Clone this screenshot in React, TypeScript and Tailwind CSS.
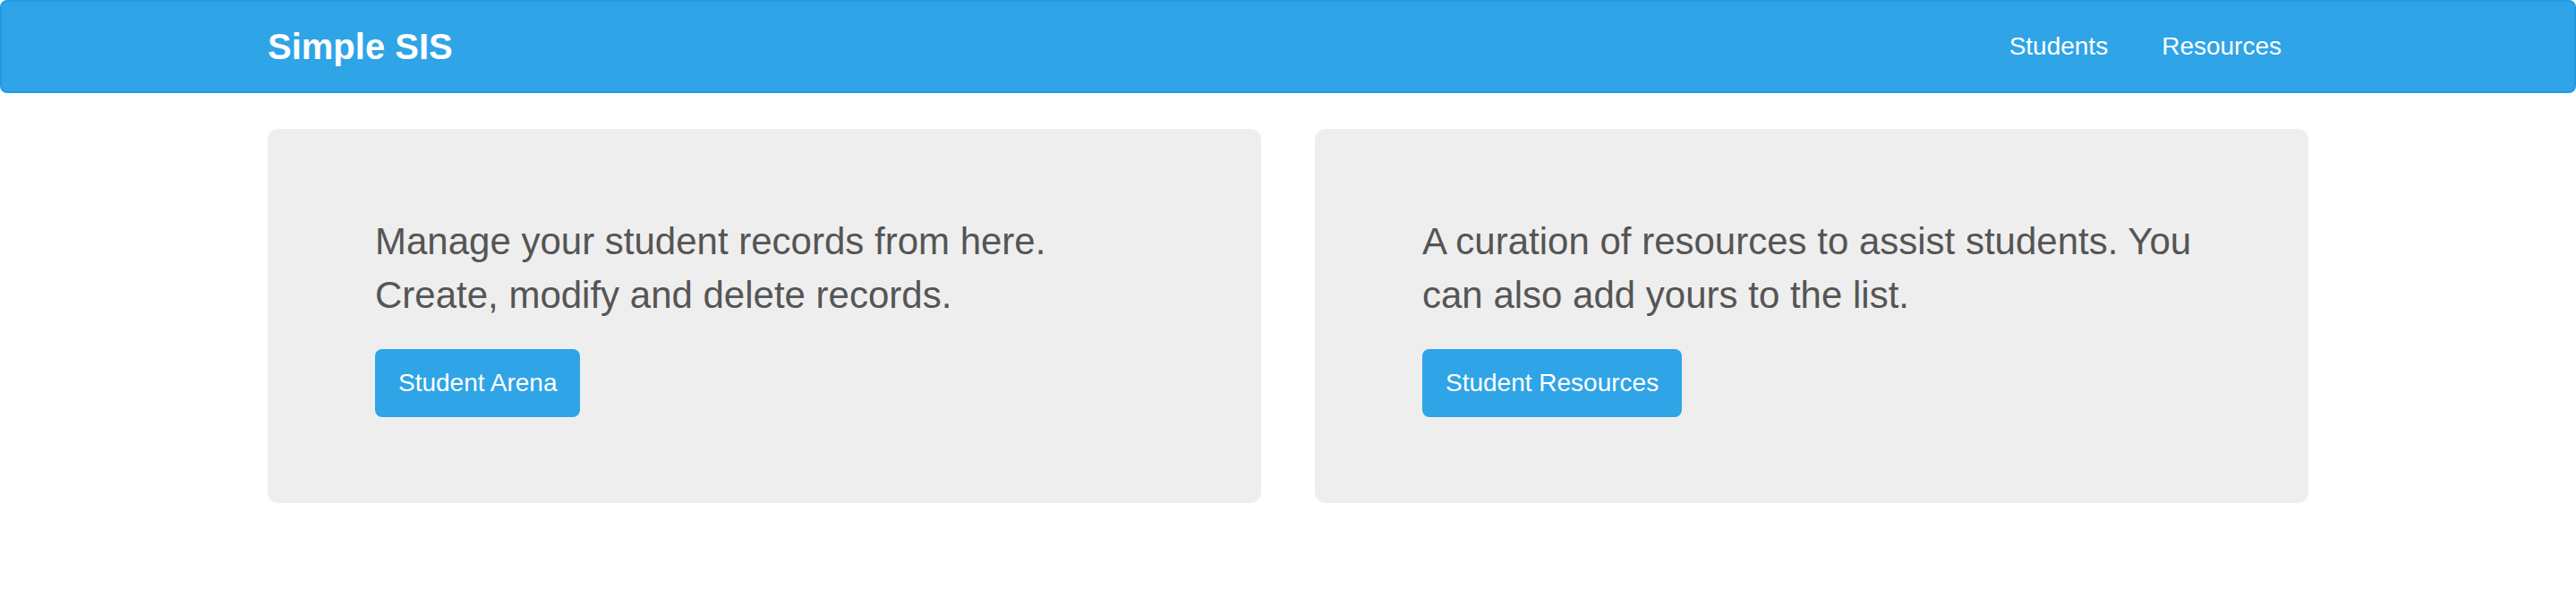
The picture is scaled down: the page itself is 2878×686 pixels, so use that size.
import React from "react";

const cards = [
  {
    text: "Manage your student records from here. Create, modify and delete records.",
    label: "Student Arena",
  },
  {
    text: "A curation of resources to assist students. You can also add yours to the list.",
    label: "Student Resources",
  },
];

export default function App() {
  return (
    <div className="min-h-[686px] bg-white font-['Liberation_Sans',Arial,sans-serif] text-[#555555]">
      <nav className="mb-[40px] h-[104px] rounded-lg border-2 border-[#1d9ce5] bg-[#2fa4e7]">
        <div className="mx-auto flex w-[2340px] items-start justify-between px-[30px]">
          <a className="py-[30px] text-[40px] font-bold leading-[40px] text-white" href="#">
            Simple SIS
          </a>
          <ul className="flex">
            <li>
              <a className="block px-[30px] py-[30px] text-[28px] leading-[40px] text-white" href="#">
                Students
              </a>
            </li>
            <li>
              <a className="block px-[30px] py-[30px] text-[28px] leading-[40px] text-white" href="#">
                Resources
              </a>
            </li>
          </ul>
        </div>
      </nav>
      <div className="mx-auto grid w-[2340px] grid-cols-2 gap-[60px] px-[30px]">
        {cards.map((card) => (
          <div key={card.label} className="rounded-xl bg-[#eeeeee] px-[120px] py-[96px]">
            <p className="mb-[30px] text-[42px] leading-[60px] text-[#555555]">{card.text}</p>
            <button className="rounded-lg bg-[#2fa4e7] px-[26px] py-[18px] text-[28px] leading-[40px] text-white">
              {card.label}
            </button>
          </div>
        ))}
      </div>
    </div>
  );
}
